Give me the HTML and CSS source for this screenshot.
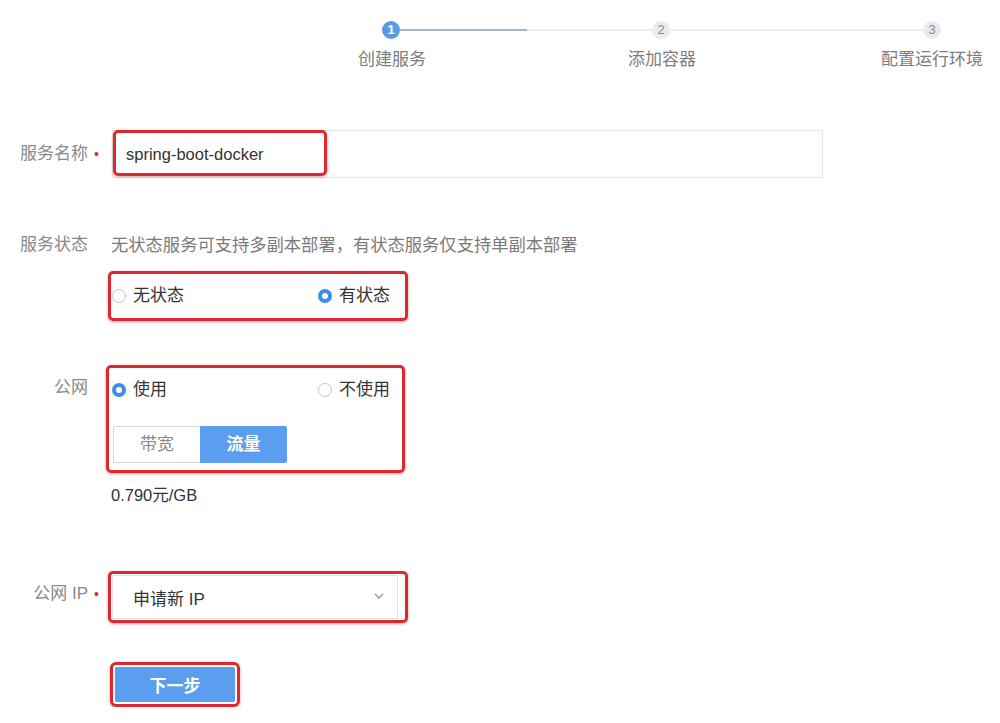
FILE: index.html
```html
<!DOCTYPE html>
<html lang="zh-CN">
<head>
    <meta charset="UTF-8">
    <meta name="viewport" content="width=device-width, initial-scale=1.0">
    <title>创建服务</title>
    <link rel="stylesheet" href="styles.css">
</head>
<body>
    <!-- Шаги мастера -->
    <div class="steps">
        <div class="step-track">
            <span class="dot active">1</span>
            <span class="line half"></span>
            <span class="dot">2</span>
            <span class="line"></span>
            <span class="dot">3</span>
        </div>
        <div class="step-labels">
            <div class="step-label">创建服务</div>
            <div class="step-label">添加容器</div>
            <div class="step-label">配置运行环境</div>
        </div>
    </div>

    <div class="form">
        <!-- Имя сервиса -->
        <div class="row row-center row-name">
            <div class="label">服务名称</div>
            <div class="req">•</div>
            <div class="input">
                <div class="mark mark-name">spring-boot-docker</div>
            </div>
        </div>

        <!-- Состояние -->
        <div class="row row-center row-state">
            <div class="label">服务状态</div>
            <div class="req"></div>
            <div class="hint">无状态服务可支持多副本部署，有状态服务仅支持单副本部署</div>
        </div>

        <div class="row row-radios">
            <div class="label"></div>
            <div class="req"></div>
            <div class="mark mark-state">
                <label class="radio"><span class="circle"></span>无状态</label>
                <label class="radio"><span class="circle checked"></span>有状态</label>
            </div>
        </div>

        <!-- Публичная сеть -->
        <div class="row row-net">
            <div class="label label-top">公网</div>
            <div class="req"></div>
            <div class="mark mark-net">
                <div class="radios">
                    <label class="radio"><span class="circle checked"></span>使用</label>
                    <label class="radio"><span class="circle"></span>不使用</label>
                </div>
                <div class="segment">
                    <span class="seg">带宽</span>
                    <span class="seg seg-on">流量</span>
                </div>
            </div>
        </div>

        <div class="row row-price">
            <div class="label"></div>
            <div class="req"></div>
            <div class="price">0.790元/GB</div>
        </div>

        <!-- IP -->
        <div class="row row-ip">
            <div class="label label-top">公网 IP</div>
            <div class="req req-top">•</div>
            <div class="mark mark-ip">
                <div class="select">
                    <span>申请新 IP</span>
                    <svg class="chevron" width="12" height="8" viewBox="0 0 12 8">
                        <path d="M2 2 L6 6 L10 2" fill="none" stroke="#9a9a9a" stroke-width="1.4"/>
                    </svg>
                </div>
            </div>
        </div>

        <div class="row row-next">
            <div class="label"></div>
            <div class="req"></div>
            <div class="mark mark-btn">
                <button class="next">下一步</button>
            </div>
        </div>
    </div>
</body>
</html>
```

FILE: styles.css
```css
body {
    margin: 0;
    background-color: #ffffff;
    font-family: "Liberation Sans", "Noto Sans CJK SC", sans-serif;
    color: #333;
}

/* === Шаги === */
.steps {
    padding-top: 21px;
}

.step-track {
    display: flex;
    align-items: center;
    padding-left: 382px;
}

.dot {
    width: 18px;
    height: 18px;
    border-radius: 50%;
    background-color: #e9ebef;
    color: #8d8d8d;
    font-size: 13px;
    line-height: 18px;
    text-align: center;
    flex: none;
}

.dot.active {
    background-color: #5a9be6;
    color: #fff;
    font-weight: bold;
}

.line {
    width: 253px;
    height: 2px;
    background-color: #eceef1;
}

.line.half {
    width: 252px;
    background: linear-gradient(to right, #a7b8cc 0, #a7b8cc 127px, #eceef1 127px);
}

.step-labels {
    display: flex;
    gap: 170px;
    padding-left: 342px;
    margin-top: 11px;
}

.step-label {
    width: 100px;
    display: flex;
    justify-content: center;
    white-space: nowrap;
    font-size: 17px;
    line-height: 20px;
    color: #7d7d7d;
}

/* === Форма === */
.form {
    margin-top: 60px;
}

.row {
    display: flex;
    align-items: flex-start;
}

.row-center {
    align-items: center;
}

.label {
    width: 88px;
    flex: none;
    text-align: right;
    font-size: 17px;
    line-height: 24px;
    color: #8a8a8a;
}

.label-top {
    padding-top: 11px;
}

.req {
    width: 14px;
    flex: none;
    padding-left: 6px;
    color: #e0282c;
    font-size: 14px;
    line-height: 24px;
}

.req-top {
    padding-top: 11px;
}

/* Красные рамки-пометки */
.mark {
    border: 3px solid #e0282c;
    border-radius: 5px;
    box-shadow: 0 1px 3px rgba(120, 0, 0, 0.35);
    box-sizing: border-box;
}

.input {
    margin-left: 4px;
    width: 711px;
    height: 48px;
    border: 1px solid #e4e4e4;
    box-sizing: border-box;
    display: flex;
}

.mark-name {
    width: 214px;
    height: 46px;
    margin: -1px 0 0 0;
    padding: 1px 0 0 10px;
    font-size: 16.5px;
    line-height: 40px;
    color: #333;
}

.row-state {
    margin-top: 55px;
}

.hint {
    padding-left: 3px;
    font-size: 17.3px;
    line-height: 24px;
    color: #7a7a7a;
    white-space: nowrap;
}

.row-radios {
    margin-top: 14px;
}

.mark-state {
    width: 300px;
    height: 50px;
    display: flex;
    align-items: center;
    padding-left: 1px;
}

.radio {
    width: 206px;
    display: flex;
    align-items: center;
    gap: 7px;
    font-size: 17px;
    line-height: 20px;
    color: #333;
}

.radio:last-child {
    width: auto;
}

.circle {
    width: 14px;
    height: 14px;
    border-radius: 50%;
    border: 1px solid #c4c4c4;
    box-sizing: border-box;
    background-color: #fff;
    flex: none;
}

.circle.checked {
    border: 4px solid #3d8de6;
    background-color: #fff;
}

.row-net {
    margin-top: 44px;
}

.mark-net {
    margin-left: -2px;
    width: 299px;
    height: 108px;
    padding: 12px 0 0 3px;
}

.radios {
    display: flex;
}

.segment {
    display: flex;
    margin-top: 26px;
    margin-left: 1px;
}

.seg {
    width: 87px;
    height: 37px;
    box-sizing: border-box;
    border: 1px solid #d4d8de;
    border-right: none;
    border-radius: 2px 0 0 2px;
    text-align: center;
    font-size: 17px;
    line-height: 35px;
    color: #8a8a8a;
}

.seg-on {
    background-color: #5b9ef0;
    border: 1px solid #5b9ef0;
    border-radius: 0 2px 2px 0;
    color: #fff;
    font-weight: bold;
}

.row-price {
    margin-top: 11px;
}

.price {
    padding-left: 3px;
    font-size: 16.5px;
    line-height: 22px;
    color: #333;
}

.row-ip {
    margin-top: 65px;
}

.mark-ip {
    width: 300px;
    height: 52px;
    padding: 1px 0 0 1px;
}

.select {
    width: 286px;
    height: 44px;
    box-sizing: border-box;
    border: 1px solid #e2e2e2;
    display: flex;
    align-items: center;
    justify-content: space-between;
    padding: 0 12px 0 20px;
    font-size: 17px;
    color: #333;
}

.chevron {
    margin-top: -2px;
}

.row-next {
    margin-top: 39px;
}

.mark-btn {
    margin-left: 2px;
    width: 130px;
    height: 45px;
    padding: 2px;
    border-radius: 6px;
}

.next {
    width: 120px;
    height: 35px;
    border: none;
    border-radius: 2px;
    background-color: #5b9ef0;
    color: #fff;
    font-family: "Liberation Sans", "Noto Sans CJK SC", sans-serif;
    font-size: 17px;
    font-weight: bold;
    cursor: pointer;
    display: block;
}
```
